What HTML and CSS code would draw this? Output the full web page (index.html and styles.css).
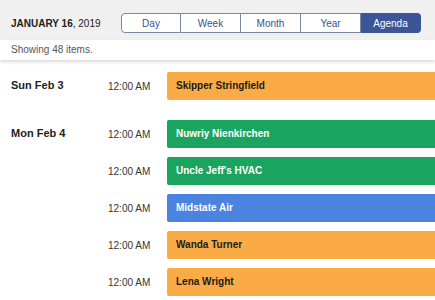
FILE: index.html
```html
<!DOCTYPE html>
<html lang="en">
<head>
  <meta charset="UTF-8" />
  <meta name="viewport" content="width=device-width, initial-scale=1.0"/>
  <title>Agenda</title>
  <link rel="stylesheet" href="styles.css">
</head>
<body>
  <div class="toolbar">
    <div class="current-date"><b>JANUARY 16</b>, 2019</div>
    <div class="views">
      <button class="view">Day</button>
      <button class="view">Week</button>
      <button class="view">Month</button>
      <button class="view">Year</button>
      <button class="view active">Agenda</button>
    </div>
  </div>
  <div class="summary">Showing 48 items.</div>

  <div class="agenda">
    <div class="day">
      <div class="day-label">Sun Feb 3</div>
      <div class="events">
        <div class="event">
          <span class="time">12:00 AM</span>
          <span class="bar orange">Skipper Stringfield</span>
        </div>
      </div>
    </div>

    <div class="day">
      <div class="day-label">Mon Feb 4</div>
      <div class="events">
        <div class="event">
          <span class="time">12:00 AM</span>
          <span class="bar green">Nuwriy Nienkirchen</span>
        </div>
        <div class="event">
          <span class="time">12:00 AM</span>
          <span class="bar green">Uncle Jeff's HVAC</span>
        </div>
        <div class="event">
          <span class="time">12:00 AM</span>
          <span class="bar blue">Midstate Air</span>
        </div>
        <div class="event">
          <span class="time">12:00 AM</span>
          <span class="bar orange">Wanda Turner</span>
        </div>
        <div class="event">
          <span class="time">12:00 AM</span>
          <span class="bar orange">Lena Wright</span>
        </div>
      </div>
    </div>
  </div>
</body>
</html>
```

FILE: styles.css
```css
body {
  margin: 0;
  font-family: "Liberation Sans", Arial, sans-serif;
  color: #222;
  background: #fff;
}
.toolbar {
  display: flex;
  align-items: center;
  justify-content: space-between;
  height: 34px;
  padding: 6px 14px 0 11px;
  background: #f0f0f0;
}
.current-date {
  font-size: 10px;
  white-space: nowrap;
  color: #222;
}
.views { display: flex; }
.view {
  width: 60px;
  height: 20px;
  margin: 0;
  padding: 0;
  font-family: inherit;
  font-size: 10px;
  color: #3a5189;
  background: #fff;
  border: 1px solid #7b86a0;
  border-left: none;
}
.view:first-child {
  border-left: 1px solid #7b86a0;
  border-radius: 4px 0 0 4px;
}
.view:last-child { border-radius: 0 4px 4px 0; }
.view.active {
  color: #fff;
  background: #3b5596;
  border-color: #3b5596;
}
.summary {
  height: 20px;
  line-height: 19px;
  padding-left: 11px;
  font-size: 10px;
  color: #555;
  background: #fff;
  box-shadow: 0 2px 3px rgba(0, 0, 0, 0.15);
}
.agenda { padding-top: 12px; }
.day {
  display: flex;
  margin-bottom: 20px;
}
.day:last-child { margin-bottom: 0; }
.day-label {
  width: 97px;
  padding-left: 11px;
  line-height: 27px;
  font-size: 11px;
  font-weight: bold;
}
.events {
  flex: 1;
  display: flex;
  flex-direction: column;
  gap: 9px;
}
.event {
  display: flex;
  align-items: center;
  height: 28px;
}
.time {
  width: 59px;
  font-size: 10px;
  color: #333;
}
.bar {
  flex: 1;
  height: 28px;
  line-height: 28px;
  padding-left: 9px;
  font-size: 10px;
  font-weight: bold;
  border-radius: 2px 0 0 2px;
}
.orange { background: #fbab46; color: #1a1a1a; }
.green { background: #1ba460; color: #fff; }
.blue { background: #4a83e0; color: #fff; }
```
